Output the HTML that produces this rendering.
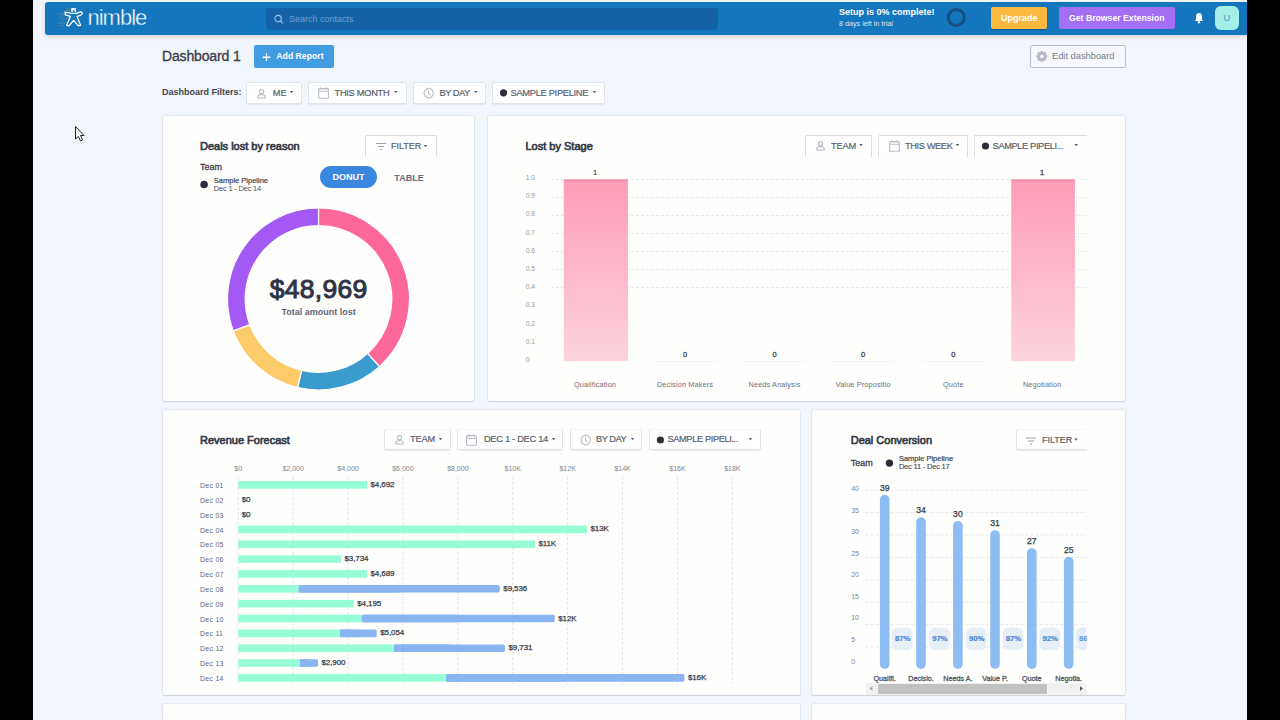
<!DOCTYPE html>
<html><head><meta charset="utf-8">
<style>
*{box-sizing:border-box;margin:0;padding:0}
html,body{width:1280px;height:720px;overflow:hidden;background:#000;font-family:"Liberation Sans",sans-serif;position:relative}
.abs{position:absolute}
.t{position:absolute;white-space:nowrap;line-height:1}
svg.ov{position:absolute;left:0;top:0;pointer-events:none}
</style></head><body>
<div class="abs" style="left:33px;top:0px;width:1214px;height:720px;background:#f1f5fc"></div>
<div class="abs" style="left:45px;top:2px;width:1202px;height:33px;background:#1476bd;border-radius:3px 0 0 3px;box-shadow:0 2px 4px rgba(0,0,0,.13)"></div>
<div class="abs" style="left:266px;top:8px;width:452px;height:22px;background:#1562a6;border-radius:3px"></div>
<div class="abs" style="left:991px;top:7px;width:56px;height:22px;background:#fcb940;border-radius:2px;box-shadow:0 1px 1px rgba(0,0,0,.25)"></div>
<div class="abs" style="left:1059px;top:7px;width:116px;height:22px;background:#a36ff5;border-radius:2px"></div>
<div class="abs" style="left:1215px;top:6px;width:24px;height:24px;background:#a4efe6;border-radius:6px"></div>
<div class="abs" style="left:254px;top:45px;width:80px;height:23px;background:#429ce2;border-radius:2px"></div>
<div class="abs" style="left:1030px;top:45px;width:96px;height:23px;border:1px solid #b9bec8;border-radius:2px;background:#f6f8fb"></div>
<div class="abs" style="left:163px;top:116px;width:311px;height:285px;background:#fefefd;border-radius:2px;box-shadow:0 1px 1px rgba(120,130,150,.22),0 0 0 1px rgba(205,215,225,.4)"></div>
<div class="abs" style="left:488px;top:116px;width:637px;height:285px;background:#fefefd;border-radius:2px;box-shadow:0 1px 1px rgba(120,130,150,.22),0 0 0 1px rgba(205,215,225,.4)"></div>
<div class="abs" style="left:163px;top:410px;width:637px;height:285px;background:#fefefd;border-radius:2px;box-shadow:0 1px 1px rgba(120,130,150,.22),0 0 0 1px rgba(205,215,225,.4)"></div>
<div class="abs" style="left:812px;top:410px;width:313px;height:285px;background:#fefefd;border-radius:2px;box-shadow:0 1px 1px rgba(120,130,150,.22),0 0 0 1px rgba(205,215,225,.4)"></div>
<div class="abs" style="left:163px;top:704px;width:637px;height:285px;background:#fefefd;border-radius:2px;box-shadow:0 1px 1px rgba(120,130,150,.22),0 0 0 1px rgba(205,215,225,.4)"></div>
<div class="abs" style="left:812px;top:704px;width:313px;height:285px;background:#fefefd;border-radius:2px;box-shadow:0 1px 1px rgba(120,130,150,.22),0 0 0 1px rgba(205,215,225,.4)"></div>
<div class="abs" style="left:246px;top:81.5px;width:56px;height:22px;background:#fff;border:1px solid #dfe3ea;border-radius:2px;box-shadow:0 1px 0 rgba(0,0,0,.06)"></div>
<div class="abs" style="left:308px;top:81.5px;width:99px;height:22px;background:#fff;border:1px solid #dfe3ea;border-radius:2px;box-shadow:0 1px 0 rgba(0,0,0,.06)"></div>
<div class="abs" style="left:413px;top:81.5px;width:73px;height:22px;background:#fff;border:1px solid #dfe3ea;border-radius:2px;box-shadow:0 1px 0 rgba(0,0,0,.06)"></div>
<div class="abs" style="left:492px;top:81.5px;width:113px;height:22px;background:#fff;border:1px solid #dfe3ea;border-radius:2px;box-shadow:0 1px 0 rgba(0,0,0,.06)"></div>
<div class="abs" style="left:365px;top:135px;width:72px;height:22px;background:#fff;border:1px solid #d9dde5;border-bottom:none;border-radius:2px 2px 0 0"></div>
<div class="abs" style="left:320px;top:166px;width:57px;height:22px;background:#3b86de;border-radius:11px"></div>
<div class="abs" style="left:805px;top:135px;width:67px;height:22px;background:#fff;border:1px solid #d9dde5;border-bottom:none;border-radius:2px 2px 0 0"></div>
<div class="abs" style="left:878px;top:135px;width:90px;height:22px;background:#fff;border:1px solid #d9dde5;border-bottom:none;border-radius:2px 2px 0 0"></div>
<div class="abs" style="left:974px;top:135px;width:113px;height:22px;background:#fff;border-left:1px solid #d9dde5;border-top:1px solid #d9dde5"></div>
<div class="abs" style="left:384px;top:429px;width:67px;height:21px;background:#fff;border:1px solid #dfe3ea;border-top-color:#f3f4f7;border-radius:2px;box-shadow:0 1px 0 rgba(0,0,0,.06)"></div>
<div class="abs" style="left:457px;top:429px;width:106px;height:21px;background:#fff;border:1px solid #dfe3ea;border-top-color:#f3f4f7;border-radius:2px;box-shadow:0 1px 0 rgba(0,0,0,.06)"></div>
<div class="abs" style="left:570px;top:429px;width:72px;height:21px;background:#fff;border:1px solid #dfe3ea;border-top-color:#f3f4f7;border-radius:2px;box-shadow:0 1px 0 rgba(0,0,0,.06)"></div>
<div class="abs" style="left:649px;top:429px;width:112px;height:21px;background:#fff;border:1px solid #dfe3ea;border-top-color:#f3f4f7;border-radius:2px;box-shadow:0 1px 0 rgba(0,0,0,.06)"></div>
<div class="abs" style="left:1016px;top:429px;width:71px;height:21px;background:#fff;border:1px solid #dfe3ea;border-top-color:#f3f4f7;border-right:none;border-radius:2px 0 0 2px;box-shadow:0 1px 0 rgba(0,0,0,.06)"></div>
<div class="abs" style="left:866px;top:682.5px;width:221px;height:12px;background:#f1f1f1"></div>
<div class="abs" style="left:878.3px;top:684.2px;width:169px;height:9.8px;background:#c1c1c1"></div>
<svg class="ov" width="1280" height="720" viewBox="0 0 1280 720">
<g transform="translate(54,4)">
    <rect x="17.2" y="4.1" width="4.9" height="3.8" fill="#eaf6ff"/><rect x="18.8" y="6.2" width="1.6" height="1.7" fill="#1476bd"/>
    <rect x="11.5" y="4.2" width="4.5" height="3.4" fill="#7d7470" opacity=".55"/>
    <path d="M11 8.2 L16.5 9.2 L22.5 9.3 L27 7.6 L28.6 9.4 L26.5 11.4 L23 12.3 L26.6 21.4 L24.4 21.9 L19.6 16.4 L15 21.9 L12.6 21.4 L16.4 12.3 L11.4 10.8 Z" fill="none" stroke="#fff" stroke-width="1.3" stroke-linejoin="round"/>
    <path d="M4 9.5 L10 9.5 M5 12 L11 12 M7 14.5 L13 14.5 M6 17 L12 17 M5 19.5 L11 19.5 M6 21.5 L10 21.5" stroke="#9a8a80" stroke-width="1.2" stroke-dasharray="1.2 1.2" opacity=".8"/></g>
<g transform="translate(273.5,14)"><circle cx="4.6" cy="4.6" r="3.2" fill="none" stroke="#9cc2e6" stroke-width="1.1"/><path d="M7 7 L9.3 9.3" stroke="#9cc2e6" stroke-width="1.2"/></g>
<circle cx="956.3" cy="17.4" r="8" fill="none" stroke="#184e80" stroke-width="3"/>
<g transform="translate(1193,12)"><path d="M6 1 C3.5 1 3 3 3 5 L3 7.5 L1.8 9 L10.2 9 L9 7.5 L9 5 C9 3 8.5 1 6 1 Z" fill="#fff"/><circle cx="6" cy="10.3" r="1.2" fill="#fff"/></g>
<path d="M266.5 53.3 V61 M262.7 57.2 H270.4" stroke="#fff" stroke-width="1.4"/>
<path fill-rule="evenodd" fill="#b4b8c0" d="M1045.79 55.09 L1047.23 55.05 L1047.23 57.75 L1045.79 57.71 L1045.55 58.29 L1046.60 59.28 L1044.68 61.20 L1043.69 60.15 L1043.11 60.39 L1043.15 61.83 L1040.45 61.83 L1040.49 60.39 L1039.91 60.15 L1038.92 61.20 L1037.00 59.28 L1038.05 58.29 L1037.81 57.71 L1036.37 57.75 L1036.37 55.05 L1037.81 55.09 L1038.05 54.51 L1037.00 53.52 L1038.92 51.60 L1039.91 52.65 L1040.49 52.41 L1040.45 50.97 L1043.15 50.97 L1043.11 52.41 L1043.69 52.65 L1044.68 51.60 L1046.60 53.52 L1045.55 54.51 Z M1041.8 54.6 A1.8 1.8 0 1 0 1041.8 58.2 A1.8 1.8 0 1 0 1041.8 54.6 Z"/>
<g transform="translate(257,89)" fill="none" stroke="#b8bcc5" stroke-width="1.1"><circle cx="4.5" cy="2.6" r="2.1"/><path d="M0.8 9 L0.8 7.6 C0.8 6 2.5 5.6 4.5 5.6 C6.5 5.6 8.2 6 8.2 7.6 L8.2 9 Z"/></g>
<path d="M289.8 91 L293.40000000000003 91 L291.6 93.2 Z" fill="#5c6270"/>
<g transform="translate(318,87)" fill="none" stroke="#b8bcc5" stroke-width="1.1"><rect x="0.6" y="1.6" width="9.8" height="9.6" rx="1"/><path d="M0.6 4.2 H10.4 M3 0.2 V2.5 M8 0.2 V2.5"/></g>
<path d="M394.0 91 L397.6 91 L395.8 93.2 Z" fill="#5c6270"/>
<g transform="translate(423.5,87.5)" fill="none" stroke="#b8bcc5" stroke-width="1.1"><circle cx="5.2" cy="5.6" r="4.7"/><path d="M5 3 V5.8 L7.4 7.6"/></g>
<path d="M474.0 91 L477.6 91 L475.8 93.2 Z" fill="#5c6270"/>
<circle cx="503.5" cy="92.8" r="3.6" fill="#2b2f3b"/>
<path d="M592.7 91 L596.3 91 L594.5 93.2 Z" fill="#5c6270"/>
<g transform="translate(376,142.5)" stroke="#9ca1aa" stroke-width="1.1"><path d="M0 1 H10 M2 4 H8 M4 7 H6"/></g>
<path d="M423.7 145 L427.3 145 L425.5 147.2 Z" fill="#5c6270"/>
<circle cx="204.1" cy="184.5" r="3.8" fill="#2b2f3b"/>
<path d="M318.50 208.00 A91 91 0 0 1 379.39 366.63 L367.55 353.47 A73.3 73.3 0 0 0 318.50 225.70 Z" fill="#fe6899" stroke="#fff" stroke-width="1.2"/>
<path d="M379.39 366.63 A91 91 0 0 1 297.57 387.56 L301.64 370.33 A73.3 73.3 0 0 0 367.55 353.47 Z" fill="#3a9bcd" stroke="#fff" stroke-width="1.2"/>
<path d="M297.57 387.56 A91 91 0 0 1 233.26 330.87 L249.84 324.67 A73.3 73.3 0 0 0 301.64 370.33 Z" fill="#fdcb6a" stroke="#fff" stroke-width="1.2"/>
<path d="M233.26 330.87 A91 91 0 0 1 318.50 208.00 L318.50 225.70 A73.3 73.3 0 0 0 249.84 324.67 Z" fill="#a459f5" stroke="#fff" stroke-width="1.2"/>
<g transform="translate(816,141)" fill="none" stroke="#b8bcc5" stroke-width="1.1"><circle cx="4.5" cy="2.6" r="2.1"/><path d="M0.8 9 L0.8 7.6 C0.8 6 2.5 5.6 4.5 5.6 C6.5 5.6 8.2 6 8.2 7.6 L8.2 9 Z"/></g>
<path d="M859.2 144 L862.8 144 L861 146.2 Z" fill="#5c6270"/>
<g transform="translate(889,140)" fill="none" stroke="#b8bcc5" stroke-width="1.1"><rect x="0.6" y="1.6" width="9.8" height="9.6" rx="1"/><path d="M0.6 4.2 H10.4 M3 0.2 V2.5 M8 0.2 V2.5"/></g>
<path d="M955.7 144 L959.3 144 L957.5 146.2 Z" fill="#5c6270"/>
<circle cx="985.5" cy="146" r="3.6" fill="#2b2f3b"/>
<path d="M1074.4 144 L1078.0 144 L1076.2 146.2 Z" fill="#5c6270"/>
<line x1="551" y1="179.5" x2="1087" y2="179.5" stroke="#e5e7ec" stroke-width="1" stroke-dasharray="3 2"/>
<line x1="551" y1="197.5" x2="1087" y2="197.5" stroke="#e5e7ec" stroke-width="1" stroke-dasharray="3 2"/>
<line x1="551" y1="215.5" x2="1087" y2="215.5" stroke="#e5e7ec" stroke-width="1" stroke-dasharray="3 2"/>
<line x1="551" y1="233.5" x2="1087" y2="233.5" stroke="#e5e7ec" stroke-width="1" stroke-dasharray="3 2"/>
<line x1="551" y1="251.5" x2="1087" y2="251.5" stroke="#e5e7ec" stroke-width="1" stroke-dasharray="3 2"/>
<line x1="551" y1="269.5" x2="1087" y2="269.5" stroke="#e5e7ec" stroke-width="1" stroke-dasharray="3 2"/>
<line x1="551" y1="287.5" x2="1087" y2="287.5" stroke="#e5e7ec" stroke-width="1" stroke-dasharray="3 2"/>
<defs><linearGradient id="pg" x1="0" y1="0" x2="0" y2="1"><stop offset="0" stop-color="#fe9db7"/><stop offset="1" stop-color="#fdd3de"/></linearGradient></defs>
<rect x="563.8" y="179.5" width="64.2" height="181.7" fill="url(#pg)"/><rect x="563.8" y="179.5" width="64.2" height="1.6" fill="#f08fad"/>
<rect x="1011.2" y="179.5" width="63.7" height="181.7" fill="url(#pg)"/><rect x="1011.2" y="179.5" width="63.7" height="1.6" fill="#f08fad"/>
<line x1="653" y1="361.5" x2="717" y2="361.5" stroke="#f4f5f8" stroke-width="1"/>
<line x1="742.5" y1="361.5" x2="806.5" y2="361.5" stroke="#f4f5f8" stroke-width="1"/>
<line x1="831.2" y1="361.5" x2="895.2" y2="361.5" stroke="#f4f5f8" stroke-width="1"/>
<line x1="921.3" y1="361.5" x2="985.3" y2="361.5" stroke="#f4f5f8" stroke-width="1"/>
<g transform="translate(395,435)" fill="none" stroke="#b8bcc5" stroke-width="1.1"><circle cx="4.5" cy="2.6" r="2.1"/><path d="M0.8 9 L0.8 7.6 C0.8 6 2.5 5.6 4.5 5.6 C6.5 5.6 8.2 6 8.2 7.6 L8.2 9 Z"/></g>
<path d="M438.7 438 L442.3 438 L440.5 440.2 Z" fill="#5c6270"/>
<g transform="translate(466,434)" fill="none" stroke="#b8bcc5" stroke-width="1.1"><rect x="0.6" y="1.6" width="9.8" height="9.6" rx="1"/><path d="M0.6 4.2 H10.4 M3 0.2 V2.5 M8 0.2 V2.5"/></g>
<path d="M551.7 438 L555.3 438 L553.5 440.2 Z" fill="#5c6270"/>
<g transform="translate(580.5,434.5)" fill="none" stroke="#b8bcc5" stroke-width="1.1"><circle cx="5.2" cy="5.6" r="4.7"/><path d="M5 3 V5.8 L7.4 7.6"/></g>
<path d="M630.8000000000001 438 L634.4 438 L632.6 440.2 Z" fill="#5c6270"/>
<circle cx="660.4" cy="440" r="3.6" fill="#2b2f3b"/>
<path d="M748.8000000000001 438 L752.4 438 L750.6 440.2 Z" fill="#5c6270"/>
<line x1="238.25" y1="477" x2="238.25" y2="684" stroke="#e2e4ea" stroke-width="1" stroke-dasharray="3 2"/>
<line x1="293.15" y1="477" x2="293.15" y2="684" stroke="#e2e4ea" stroke-width="1" stroke-dasharray="3 2"/>
<line x1="348.05" y1="477" x2="348.05" y2="684" stroke="#e2e4ea" stroke-width="1" stroke-dasharray="3 2"/>
<line x1="402.95" y1="477" x2="402.95" y2="684" stroke="#e2e4ea" stroke-width="1" stroke-dasharray="3 2"/>
<line x1="457.85" y1="477" x2="457.85" y2="684" stroke="#e2e4ea" stroke-width="1" stroke-dasharray="3 2"/>
<line x1="512.75" y1="477" x2="512.75" y2="684" stroke="#e2e4ea" stroke-width="1" stroke-dasharray="3 2"/>
<line x1="567.65" y1="477" x2="567.65" y2="684" stroke="#e2e4ea" stroke-width="1" stroke-dasharray="3 2"/>
<line x1="622.55" y1="477" x2="622.55" y2="684" stroke="#e2e4ea" stroke-width="1" stroke-dasharray="3 2"/>
<line x1="677.45" y1="477" x2="677.45" y2="684" stroke="#e2e4ea" stroke-width="1" stroke-dasharray="3 2"/>
<line x1="732.35" y1="477" x2="732.35" y2="684" stroke="#e2e4ea" stroke-width="1" stroke-dasharray="3 2"/>
<rect x="238.25" y="481.05" width="128.75" height="7.6" fill="#97fdd7"/>
<rect x="238.25" y="525.60" width="348.75" height="7.6" fill="#97fdd7"/>
<rect x="238.25" y="540.45" width="296.65" height="7.6" fill="#97fdd7"/>
<rect x="238.25" y="555.30" width="102.75" height="7.6" fill="#97fdd7"/>
<rect x="238.25" y="570.15" width="128.75" height="7.6" fill="#97fdd7"/>
<rect x="238.25" y="585.00" width="60.50" height="7.6" fill="#97fdd7"/>
<rect x="298.75" y="585.00" width="201.05" height="7.6" rx="1.8" fill="#8ab4f0"/><rect x="298.75" y="585.00" width="100.53" height="7.6" fill="#8ab4f0"/>
<rect x="238.25" y="599.85" width="115.50" height="7.6" fill="#97fdd7"/>
<rect x="238.25" y="614.70" width="123.50" height="7.6" fill="#97fdd7"/>
<rect x="361.75" y="614.70" width="192.95" height="7.6" rx="1.8" fill="#8ab4f0"/><rect x="361.75" y="614.70" width="96.48" height="7.6" fill="#8ab4f0"/>
<rect x="238.25" y="629.55" width="101.75" height="7.6" fill="#97fdd7"/>
<rect x="340" y="629.55" width="36.75" height="7.6" rx="1.8" fill="#8ab4f0"/><rect x="340" y="629.55" width="18.38" height="7.6" fill="#8ab4f0"/>
<rect x="238.25" y="644.40" width="156.00" height="7.6" fill="#97fdd7"/>
<rect x="394.25" y="644.40" width="110.75" height="7.6" rx="1.8" fill="#8ab4f0"/><rect x="394.25" y="644.40" width="55.38" height="7.6" fill="#8ab4f0"/>
<rect x="238.25" y="659.25" width="61.75" height="7.6" fill="#97fdd7"/>
<rect x="300" y="659.25" width="18.00" height="7.6" rx="1.8" fill="#8ab4f0"/><rect x="300" y="659.25" width="9.00" height="7.6" fill="#8ab4f0"/>
<rect x="238.25" y="674.10" width="208.00" height="7.6" fill="#97fdd7"/>
<rect x="446.25" y="674.10" width="238.15" height="7.6" rx="1.8" fill="#8ab4f0"/><rect x="446.25" y="674.10" width="119.07" height="7.6" fill="#8ab4f0"/>
<g transform="translate(1026,437)" stroke="#9ca1aa" stroke-width="1.1"><path d="M0 1 H10 M2 4 H8 M4 7 H6"/></g>
<path d="M1074.2 438.5 L1077.8 438.5 L1076 440.7 Z" fill="#5c6270"/>
<circle cx="889.4" cy="463.1" r="3.7" fill="#2b2f3b"/>
<line x1="865.5" y1="490.20" x2="1086.5" y2="490.20" stroke="#e5e7ec" stroke-width="1" stroke-dasharray="3 2"/>
<line x1="865.5" y1="512.60" x2="1086.5" y2="512.60" stroke="#e5e7ec" stroke-width="1" stroke-dasharray="3 2"/>
<line x1="865.5" y1="535.00" x2="1086.5" y2="535.00" stroke="#e5e7ec" stroke-width="1" stroke-dasharray="3 2"/>
<line x1="865.5" y1="557.40" x2="1086.5" y2="557.40" stroke="#e5e7ec" stroke-width="1" stroke-dasharray="3 2"/>
<line x1="865.5" y1="579.80" x2="1086.5" y2="579.80" stroke="#e5e7ec" stroke-width="1" stroke-dasharray="3 2"/>
<line x1="865.5" y1="602.20" x2="1086.5" y2="602.20" stroke="#e5e7ec" stroke-width="1" stroke-dasharray="3 2"/>
<line x1="865.5" y1="624.60" x2="1086.5" y2="624.60" stroke="#e5e7ec" stroke-width="1" stroke-dasharray="3 2"/>
<line x1="865.5" y1="647.00" x2="1086.5" y2="647.00" stroke="#e5e7ec" stroke-width="1" stroke-dasharray="3 2"/>
<rect x="879.9000000000001" y="494.8" width="9.6" height="174.2" rx="4.8" fill="#8ebcf5"/>
<rect x="916.2" y="517.3" width="9.6" height="151.7" rx="4.8" fill="#8ebcf5"/>
<rect x="953.1000000000001" y="521.1" width="9.6" height="147.9" rx="4.8" fill="#8ebcf5"/>
<rect x="990.2" y="530.2" width="9.6" height="138.8" rx="4.8" fill="#8ebcf5"/>
<rect x="1027.0" y="548.2" width="9.6" height="120.8" rx="4.8" fill="#8ebcf5"/>
<rect x="1063.9" y="556.7" width="9.6" height="112.3" rx="4.8" fill="#8ebcf5"/>
<defs><clipPath id="c4"><rect x="812" y="410" width="274.5" height="285"/></clipPath></defs>
<rect clip-path="url(#c4)" x="892.0" y="627.5" width="20.6" height="22.7" rx="6" fill="#e6eef8"/>
<rect clip-path="url(#c4)" x="929.2" y="627.5" width="20.6" height="22.7" rx="6" fill="#e6eef8"/>
<rect clip-path="url(#c4)" x="966.0" y="627.5" width="20.6" height="22.7" rx="6" fill="#e6eef8"/>
<rect clip-path="url(#c4)" x="1002.8000000000001" y="627.5" width="20.6" height="22.7" rx="6" fill="#e6eef8"/>
<rect clip-path="url(#c4)" x="1039.5" y="627.5" width="20.6" height="22.7" rx="6" fill="#e6eef8"/>
<rect clip-path="url(#c4)" x="1076.2" y="627.5" width="20.6" height="22.7" rx="6" fill="#e6eef8"/>
<path d="M869.5 688.5 L872.5 686.3 L872.5 690.7 Z" fill="#a3a3a3"/><path d="M1083 688.5 L1080 686.3 L1080 690.7 Z" fill="#505050"/>
<path d="M75.5 126.5 L75.5 139 L78.5 136.5 L80.5 141 L82.5 140 L80.5 135.5 L84 135.5 Z" fill="#fff" stroke="#222" stroke-width="1"/>
</svg>
<div class="t" style="left:87.50px;top:7.38px;font-size:22px;font-weight:normal;color:#fff;letter-spacing:-1px;-webkit-text-stroke:0.4px #1476bd">nimble</div>
<div class="t" style="left:289.00px;top:14.68px;font-size:9px;font-weight:normal;color:#6d9fd0;">Search contacts</div>
<div class="t" style="left:839.00px;top:8.38px;font-size:9px;font-weight:bold;color:#fff;">Setup is 0% complete!</div>
<div class="t" style="left:839.00px;top:19.91px;font-size:7.2px;font-weight:normal;color:#d8e8f7;">8 days left in trial</div>
<div class="t" style="left:1001.00px;top:13.68px;font-size:9px;font-weight:bold;color:#fff;">Upgrade</div>
<div class="t" style="left:1069.00px;top:13.94px;font-size:8.7px;font-weight:bold;color:#fff;">Get Browser Extension</div>
<div class="t" style="left:1223.50px;top:12.96px;font-size:9.5px;font-weight:normal;color:#5b8fcf;">U</div>
<div class="t" style="left:162.00px;top:49.35px;font-size:14px;font-weight:normal;color:#393c47;-webkit-text-stroke:0.3px #393c47;letter-spacing:-0.15px">Dashboard 1</div>
<div class="t" style="left:276.30px;top:51.84px;font-size:8.7px;font-weight:bold;color:#fff;">Add Report</div>
<div class="t" style="left:162.00px;top:88.48px;font-size:9px;font-weight:bold;color:#3f4450;">Dashboard Filters:</div>
<div class="t" style="left:1052.00px;top:52.23px;font-size:9.3px;font-weight:normal;color:#787c86;">Edit dashboard</div>
<div class="t" style="left:272.70px;top:88.93px;font-size:9.3px;font-weight:normal;color:#5a5f6b;-webkit-text-stroke:0.2px #5a5f6b;">ME</div>
<div class="t" style="left:334.50px;top:88.93px;font-size:9.3px;font-weight:normal;color:#5a5f6b;-webkit-text-stroke:0.2px #5a5f6b;letter-spacing:-0.3px">THIS MONTH</div>
<div class="t" style="left:439.50px;top:88.93px;font-size:9.3px;font-weight:normal;color:#5a5f6b;-webkit-text-stroke:0.2px #5a5f6b;letter-spacing:-0.5px">BY DAY</div>
<div class="t" style="left:510.50px;top:88.93px;font-size:9.3px;font-weight:normal;color:#5a5f6b;-webkit-text-stroke:0.2px #5a5f6b;letter-spacing:-0.3px">SAMPLE PIPELINE</div>
<div class="t" style="left:200.00px;top:141.19px;font-size:11px;font-weight:normal;color:#333846;-webkit-text-stroke:0.65px #333846">Deals lost by reason</div>
<div class="t" style="left:391.00px;top:142.38px;font-size:9px;font-weight:normal;color:#5a5f6b;-webkit-text-stroke:0.2px #5a5f6b;">FILTER</div>
<div class="t" style="left:200.00px;top:162.98px;font-size:9px;font-weight:normal;color:#3d414d;-webkit-text-stroke:0.3px #3d414d">Team</div>
<div class="t" style="left:213.80px;top:176.85px;font-size:7.5px;font-weight:normal;color:#3d4250;-webkit-text-stroke:0.2px #3d4250">Sample Pipeline</div>
<div class="t" style="left:213.80px;top:184.65px;font-size:7.5px;font-weight:normal;color:#4a4f5c;letter-spacing:-0.2px">Dec 1 - Dec 14</div>
<div class="t" style="left:148.50px;width:400px;text-align:center;top:173.38px;font-size:9px;font-weight:bold;color:#fff;">DONUT</div>
<div class="t" style="left:209.00px;width:400px;text-align:center;top:173.68px;font-size:9px;font-weight:bold;color:#666b7e;">TABLE</div>
<div class="t" style="left:118.70px;width:400px;text-align:center;top:276.37px;font-size:26.5px;font-weight:normal;color:#2e3445;-webkit-text-stroke:1px #2e3445;letter-spacing:0.3px">$48,969</div>
<div class="t" style="left:118.70px;width:400px;text-align:center;top:308.38px;font-size:9px;font-weight:bold;color:#5f6574;">Total amount lost</div>
<div class="t" style="left:525.50px;top:141.19px;font-size:11px;font-weight:normal;color:#333846;-webkit-text-stroke:0.65px #333846">Lost by Stage</div>
<div class="t" style="left:831.00px;top:142.03px;font-size:9.3px;font-weight:normal;color:#5a5f6b;-webkit-text-stroke:0.2px #5a5f6b;letter-spacing:-0.2px">TEAM</div>
<div class="t" style="left:904.90px;top:142.03px;font-size:9.3px;font-weight:normal;color:#5a5f6b;-webkit-text-stroke:0.2px #5a5f6b;letter-spacing:-0.4px">THIS WEEK</div>
<div class="t" style="left:992.60px;top:142.03px;font-size:9.3px;font-weight:normal;color:#5a5f6b;-webkit-text-stroke:0.2px #5a5f6b;letter-spacing:-0.4px">SAMPLE PIPELI...</div>
<div class="t" style="left:525.70px;top:174.94px;font-size:6.8px;font-weight:normal;color:#969aa5;">1.0</div>
<div class="t" style="left:525.70px;top:193.16px;font-size:6.8px;font-weight:normal;color:#969aa5;">0.9</div>
<div class="t" style="left:525.70px;top:211.38px;font-size:6.8px;font-weight:normal;color:#969aa5;">0.8</div>
<div class="t" style="left:525.70px;top:229.60px;font-size:6.8px;font-weight:normal;color:#969aa5;">0.7</div>
<div class="t" style="left:525.70px;top:247.82px;font-size:6.8px;font-weight:normal;color:#969aa5;">0.6</div>
<div class="t" style="left:525.70px;top:266.04px;font-size:6.8px;font-weight:normal;color:#969aa5;">0.5</div>
<div class="t" style="left:525.70px;top:284.26px;font-size:6.8px;font-weight:normal;color:#969aa5;">0.4</div>
<div class="t" style="left:525.70px;top:302.48px;font-size:6.8px;font-weight:normal;color:#969aa5;">0.3</div>
<div class="t" style="left:525.70px;top:320.70px;font-size:6.8px;font-weight:normal;color:#969aa5;">0.2</div>
<div class="t" style="left:525.70px;top:338.92px;font-size:6.8px;font-weight:normal;color:#969aa5;">0.1</div>
<div class="t" style="left:525.70px;top:357.14px;font-size:6.8px;font-weight:normal;color:#969aa5;">0</div>
<div class="t" style="left:485.00px;width:400px;text-align:center;top:350.85px;font-size:7.5px;font-weight:normal;color:#3f4452;-webkit-text-stroke:0.3px #3f4452">0</div>
<div class="t" style="left:574.50px;width:400px;text-align:center;top:350.85px;font-size:7.5px;font-weight:normal;color:#3f4452;-webkit-text-stroke:0.3px #3f4452">0</div>
<div class="t" style="left:663.20px;width:400px;text-align:center;top:350.85px;font-size:7.5px;font-weight:normal;color:#3f4452;-webkit-text-stroke:0.3px #3f4452">0</div>
<div class="t" style="left:753.30px;width:400px;text-align:center;top:350.85px;font-size:7.5px;font-weight:normal;color:#3f4452;-webkit-text-stroke:0.3px #3f4452">0</div>
<div class="t" style="left:395.00px;width:400px;text-align:center;top:168.65px;font-size:7.5px;font-weight:normal;color:#444a58;-webkit-text-stroke:0.2px #444a58">1</div>
<div class="t" style="left:842.20px;width:400px;text-align:center;top:168.65px;font-size:7.5px;font-weight:normal;color:#444a58;-webkit-text-stroke:0.3px #444a58">1</div>
<div class="t" style="left:395.00px;width:400px;text-align:center;top:380.62px;font-size:7.3px;font-weight:normal;color:#6b7080;letter-spacing:0.15px">Qualification</div>
<div class="t" style="left:485.00px;width:400px;text-align:center;top:380.62px;font-size:7.3px;font-weight:normal;color:#6b7080;letter-spacing:0.15px">Decision Makers</div>
<div class="t" style="left:574.50px;width:400px;text-align:center;top:380.62px;font-size:7.3px;font-weight:normal;color:#6b7080;letter-spacing:0.15px">Needs Analysis</div>
<div class="t" style="left:663.20px;width:400px;text-align:center;top:380.62px;font-size:7.3px;font-weight:normal;color:#6b7080;letter-spacing:0.15px">Value Propositio</div>
<div class="t" style="left:753.30px;width:400px;text-align:center;top:380.62px;font-size:7.3px;font-weight:normal;color:#6b7080;letter-spacing:0.15px">Quote</div>
<div class="t" style="left:842.20px;width:400px;text-align:center;top:380.62px;font-size:7.3px;font-weight:normal;color:#6b7080;letter-spacing:0.15px">Negotiation</div>
<div class="t" style="left:200.00px;top:435.09px;font-size:11px;font-weight:normal;color:#333846;-webkit-text-stroke:0.65px #333846">Revenue Forecast</div>
<div class="t" style="left:410.00px;top:435.13px;font-size:9.3px;font-weight:normal;color:#5a5f6b;-webkit-text-stroke:0.2px #5a5f6b;letter-spacing:-0.2px">TEAM</div>
<div class="t" style="left:483.90px;top:435.13px;font-size:9.3px;font-weight:normal;color:#5a5f6b;-webkit-text-stroke:0.2px #5a5f6b;letter-spacing:-0.3px">DEC 1 - DEC 14</div>
<div class="t" style="left:596.00px;top:435.13px;font-size:9.3px;font-weight:normal;color:#5a5f6b;-webkit-text-stroke:0.2px #5a5f6b;letter-spacing:-0.5px">BY DAY</div>
<div class="t" style="left:667.40px;top:435.13px;font-size:9.3px;font-weight:normal;color:#5a5f6b;-webkit-text-stroke:0.2px #5a5f6b;letter-spacing:-0.4px">SAMPLE PIPELI...</div>
<div class="t" style="left:38.25px;width:400px;text-align:center;top:464.57px;font-size:7px;font-weight:normal;color:#7f8491;">$0</div>
<div class="t" style="left:93.15px;width:400px;text-align:center;top:464.57px;font-size:7px;font-weight:normal;color:#7f8491;">$2,000</div>
<div class="t" style="left:148.05px;width:400px;text-align:center;top:464.57px;font-size:7px;font-weight:normal;color:#7f8491;">$4,000</div>
<div class="t" style="left:202.95px;width:400px;text-align:center;top:464.57px;font-size:7px;font-weight:normal;color:#7f8491;">$6,000</div>
<div class="t" style="left:257.85px;width:400px;text-align:center;top:464.57px;font-size:7px;font-weight:normal;color:#7f8491;">$8,000</div>
<div class="t" style="left:312.75px;width:400px;text-align:center;top:464.57px;font-size:7px;font-weight:normal;color:#7f8491;">$10K</div>
<div class="t" style="left:367.65px;width:400px;text-align:center;top:464.57px;font-size:7px;font-weight:normal;color:#7f8491;">$12K</div>
<div class="t" style="left:422.55px;width:400px;text-align:center;top:464.57px;font-size:7px;font-weight:normal;color:#7f8491;">$14K</div>
<div class="t" style="left:477.45px;width:400px;text-align:center;top:464.57px;font-size:7px;font-weight:normal;color:#7f8491;">$16K</div>
<div class="t" style="left:532.35px;width:400px;text-align:center;top:464.57px;font-size:7px;font-weight:normal;color:#7f8491;">$18K</div>
<div class="t" style="left:200.00px;top:481.97px;font-size:7px;font-weight:normal;color:#626879;letter-spacing:0.25px">Dec 01</div>
<div class="t" style="left:370.50px;top:480.93px;font-size:8px;font-weight:normal;color:#353a47;-webkit-text-stroke:0.25px #353a47;letter-spacing:-0.1px">$4,692</div>
<div class="t" style="left:200.00px;top:496.82px;font-size:7px;font-weight:normal;color:#626879;letter-spacing:0.25px">Dec 02</div>
<div class="t" style="left:241.75px;top:495.78px;font-size:8px;font-weight:normal;color:#353a47;-webkit-text-stroke:0.25px #353a47;letter-spacing:-0.1px">$0</div>
<div class="t" style="left:200.00px;top:511.67px;font-size:7px;font-weight:normal;color:#626879;letter-spacing:0.25px">Dec 03</div>
<div class="t" style="left:241.75px;top:510.63px;font-size:8px;font-weight:normal;color:#353a47;-webkit-text-stroke:0.25px #353a47;letter-spacing:-0.1px">$0</div>
<div class="t" style="left:200.00px;top:526.52px;font-size:7px;font-weight:normal;color:#626879;letter-spacing:0.25px">Dec 04</div>
<div class="t" style="left:590.50px;top:525.48px;font-size:8px;font-weight:normal;color:#353a47;-webkit-text-stroke:0.25px #353a47;letter-spacing:-0.1px">$13K</div>
<div class="t" style="left:200.00px;top:541.37px;font-size:7px;font-weight:normal;color:#626879;letter-spacing:0.25px">Dec 05</div>
<div class="t" style="left:538.40px;top:540.33px;font-size:8px;font-weight:normal;color:#353a47;-webkit-text-stroke:0.25px #353a47;letter-spacing:-0.1px">$11K</div>
<div class="t" style="left:200.00px;top:556.22px;font-size:7px;font-weight:normal;color:#626879;letter-spacing:0.25px">Dec 06</div>
<div class="t" style="left:344.50px;top:555.18px;font-size:8px;font-weight:normal;color:#353a47;-webkit-text-stroke:0.25px #353a47;letter-spacing:-0.1px">$3,734</div>
<div class="t" style="left:200.00px;top:571.07px;font-size:7px;font-weight:normal;color:#626879;letter-spacing:0.25px">Dec 07</div>
<div class="t" style="left:370.50px;top:570.03px;font-size:8px;font-weight:normal;color:#353a47;-webkit-text-stroke:0.25px #353a47;letter-spacing:-0.1px">$4,689</div>
<div class="t" style="left:200.00px;top:585.92px;font-size:7px;font-weight:normal;color:#626879;letter-spacing:0.25px">Dec 08</div>
<div class="t" style="left:503.30px;top:584.88px;font-size:8px;font-weight:normal;color:#353a47;-webkit-text-stroke:0.25px #353a47;letter-spacing:-0.1px">$9,536</div>
<div class="t" style="left:200.00px;top:600.77px;font-size:7px;font-weight:normal;color:#626879;letter-spacing:0.25px">Dec 09</div>
<div class="t" style="left:357.25px;top:599.73px;font-size:8px;font-weight:normal;color:#353a47;-webkit-text-stroke:0.25px #353a47;letter-spacing:-0.1px">$4,195</div>
<div class="t" style="left:200.00px;top:615.62px;font-size:7px;font-weight:normal;color:#626879;letter-spacing:0.25px">Dec 10</div>
<div class="t" style="left:558.20px;top:614.58px;font-size:8px;font-weight:normal;color:#353a47;-webkit-text-stroke:0.25px #353a47;letter-spacing:-0.1px">$12K</div>
<div class="t" style="left:200.00px;top:630.47px;font-size:7px;font-weight:normal;color:#626879;letter-spacing:0.25px">Dec 11</div>
<div class="t" style="left:380.25px;top:629.43px;font-size:8px;font-weight:normal;color:#353a47;-webkit-text-stroke:0.25px #353a47;letter-spacing:-0.1px">$5,054</div>
<div class="t" style="left:200.00px;top:645.32px;font-size:7px;font-weight:normal;color:#626879;letter-spacing:0.25px">Dec 12</div>
<div class="t" style="left:508.50px;top:644.28px;font-size:8px;font-weight:normal;color:#353a47;-webkit-text-stroke:0.25px #353a47;letter-spacing:-0.1px">$9,731</div>
<div class="t" style="left:200.00px;top:660.17px;font-size:7px;font-weight:normal;color:#626879;letter-spacing:0.25px">Dec 13</div>
<div class="t" style="left:321.50px;top:659.13px;font-size:8px;font-weight:normal;color:#353a47;-webkit-text-stroke:0.25px #353a47;letter-spacing:-0.1px">$2,900</div>
<div class="t" style="left:200.00px;top:675.02px;font-size:7px;font-weight:normal;color:#626879;letter-spacing:0.25px">Dec 14</div>
<div class="t" style="left:687.90px;top:673.98px;font-size:8px;font-weight:normal;color:#353a47;-webkit-text-stroke:0.25px #353a47;letter-spacing:-0.1px">$16K</div>
<div class="t" style="left:850.70px;top:435.09px;font-size:11px;font-weight:normal;color:#333846;-webkit-text-stroke:0.65px #333846">Deal Conversion</div>
<div class="t" style="left:1042.00px;top:436.18px;font-size:9px;font-weight:normal;color:#5a5f6b;-webkit-text-stroke:0.2px #5a5f6b;">FILTER</div>
<div class="t" style="left:850.70px;top:458.88px;font-size:9px;font-weight:normal;color:#474b58;-webkit-text-stroke:0.35px #474b58">Team</div>
<div class="t" style="left:898.90px;top:455.45px;font-size:7.5px;font-weight:normal;color:#3d4250;-webkit-text-stroke:0.2px #3d4250">Sample Pipeline</div>
<div class="t" style="left:898.90px;top:463.35px;font-size:7.5px;font-weight:normal;color:#3d4250;-webkit-text-stroke:0.1px #3d4250;letter-spacing:-0.2px">Dec 11 - Dec 17</div>
<div class="t" style="left:851.20px;top:484.97px;font-size:7px;font-weight:normal;color:#7f8491;">40</div>
<div class="t" style="left:851.20px;top:506.54px;font-size:7px;font-weight:normal;color:#7f8491;">35</div>
<div class="t" style="left:851.20px;top:528.11px;font-size:7px;font-weight:normal;color:#7f8491;">30</div>
<div class="t" style="left:851.20px;top:549.68px;font-size:7px;font-weight:normal;color:#7f8491;">25</div>
<div class="t" style="left:851.20px;top:571.25px;font-size:7px;font-weight:normal;color:#7f8491;">20</div>
<div class="t" style="left:851.20px;top:592.82px;font-size:7px;font-weight:normal;color:#7f8491;">15</div>
<div class="t" style="left:851.20px;top:614.39px;font-size:7px;font-weight:normal;color:#7f8491;">10</div>
<div class="t" style="left:851.20px;top:635.96px;font-size:7px;font-weight:normal;color:#7f8491;">5</div>
<div class="t" style="left:851.20px;top:657.53px;font-size:7px;font-weight:normal;color:#7f8491;">0</div>
<div class="t" style="left:684.70px;width:400px;text-align:center;top:483.72px;font-size:8.6px;font-weight:normal;color:#353a47;-webkit-text-stroke:0.25px #353a47">39</div>
<div class="t" style="left:721.00px;width:400px;text-align:center;top:506.22px;font-size:8.6px;font-weight:normal;color:#353a47;-webkit-text-stroke:0.25px #353a47">34</div>
<div class="t" style="left:757.90px;width:400px;text-align:center;top:510.02px;font-size:8.6px;font-weight:normal;color:#353a47;-webkit-text-stroke:0.25px #353a47">30</div>
<div class="t" style="left:795.00px;width:400px;text-align:center;top:519.12px;font-size:8.6px;font-weight:normal;color:#353a47;-webkit-text-stroke:0.25px #353a47">31</div>
<div class="t" style="left:831.80px;width:400px;text-align:center;top:537.12px;font-size:8.6px;font-weight:normal;color:#353a47;-webkit-text-stroke:0.25px #353a47">27</div>
<div class="t" style="left:868.70px;width:400px;text-align:center;top:545.62px;font-size:8.6px;font-weight:normal;color:#353a47;-webkit-text-stroke:0.25px #353a47">25</div>
<div class="t" style="left:702.60px;width:400px;text-align:center;top:635.20px;font-size:7.8px;font-weight:bold;color:#4f87d6;letter-spacing:-0.1px;-webkit-text-stroke:0.2px #4f87d6">87%</div>
<div class="t" style="left:739.80px;width:400px;text-align:center;top:635.20px;font-size:7.8px;font-weight:bold;color:#4f87d6;letter-spacing:-0.1px;-webkit-text-stroke:0.2px #4f87d6">97%</div>
<div class="t" style="left:776.60px;width:400px;text-align:center;top:635.20px;font-size:7.8px;font-weight:bold;color:#4f87d6;letter-spacing:-0.1px;-webkit-text-stroke:0.2px #4f87d6">90%</div>
<div class="t" style="left:813.40px;width:400px;text-align:center;top:635.20px;font-size:7.8px;font-weight:bold;color:#4f87d6;letter-spacing:-0.1px;-webkit-text-stroke:0.2px #4f87d6">87%</div>
<div class="t" style="left:850.10px;width:400px;text-align:center;top:635.20px;font-size:7.8px;font-weight:bold;color:#4f87d6;letter-spacing:-0.1px;-webkit-text-stroke:0.2px #4f87d6">92%</div>
<div class="abs" style="left:1079px;top:630px;width:7.5px;height:14px;overflow:hidden"><div class="t" style="left:0;top:4.9px;font-size:7.8px;font-weight:bold;color:#5a8fd9">86%</div></div>
<div class="t" style="left:684.70px;width:400px;text-align:center;top:675.41px;font-size:7.2px;font-weight:normal;color:#555a68;-webkit-text-stroke:0.3px #555a68">Qualifi.</div>
<div class="t" style="left:721.00px;width:400px;text-align:center;top:675.41px;font-size:7.2px;font-weight:normal;color:#555a68;-webkit-text-stroke:0.3px #555a68">Decisio.</div>
<div class="t" style="left:757.90px;width:400px;text-align:center;top:675.41px;font-size:7.2px;font-weight:normal;color:#555a68;-webkit-text-stroke:0.3px #555a68">Needs A.</div>
<div class="t" style="left:795.00px;width:400px;text-align:center;top:675.41px;font-size:7.2px;font-weight:normal;color:#555a68;-webkit-text-stroke:0.3px #555a68">Value P.</div>
<div class="t" style="left:831.80px;width:400px;text-align:center;top:675.41px;font-size:7.2px;font-weight:normal;color:#555a68;-webkit-text-stroke:0.3px #555a68">Quote</div>
<div class="t" style="left:868.70px;width:400px;text-align:center;top:675.41px;font-size:7.2px;font-weight:normal;color:#555a68;-webkit-text-stroke:0.3px #555a68">Negotia.</div>
</body></html>
